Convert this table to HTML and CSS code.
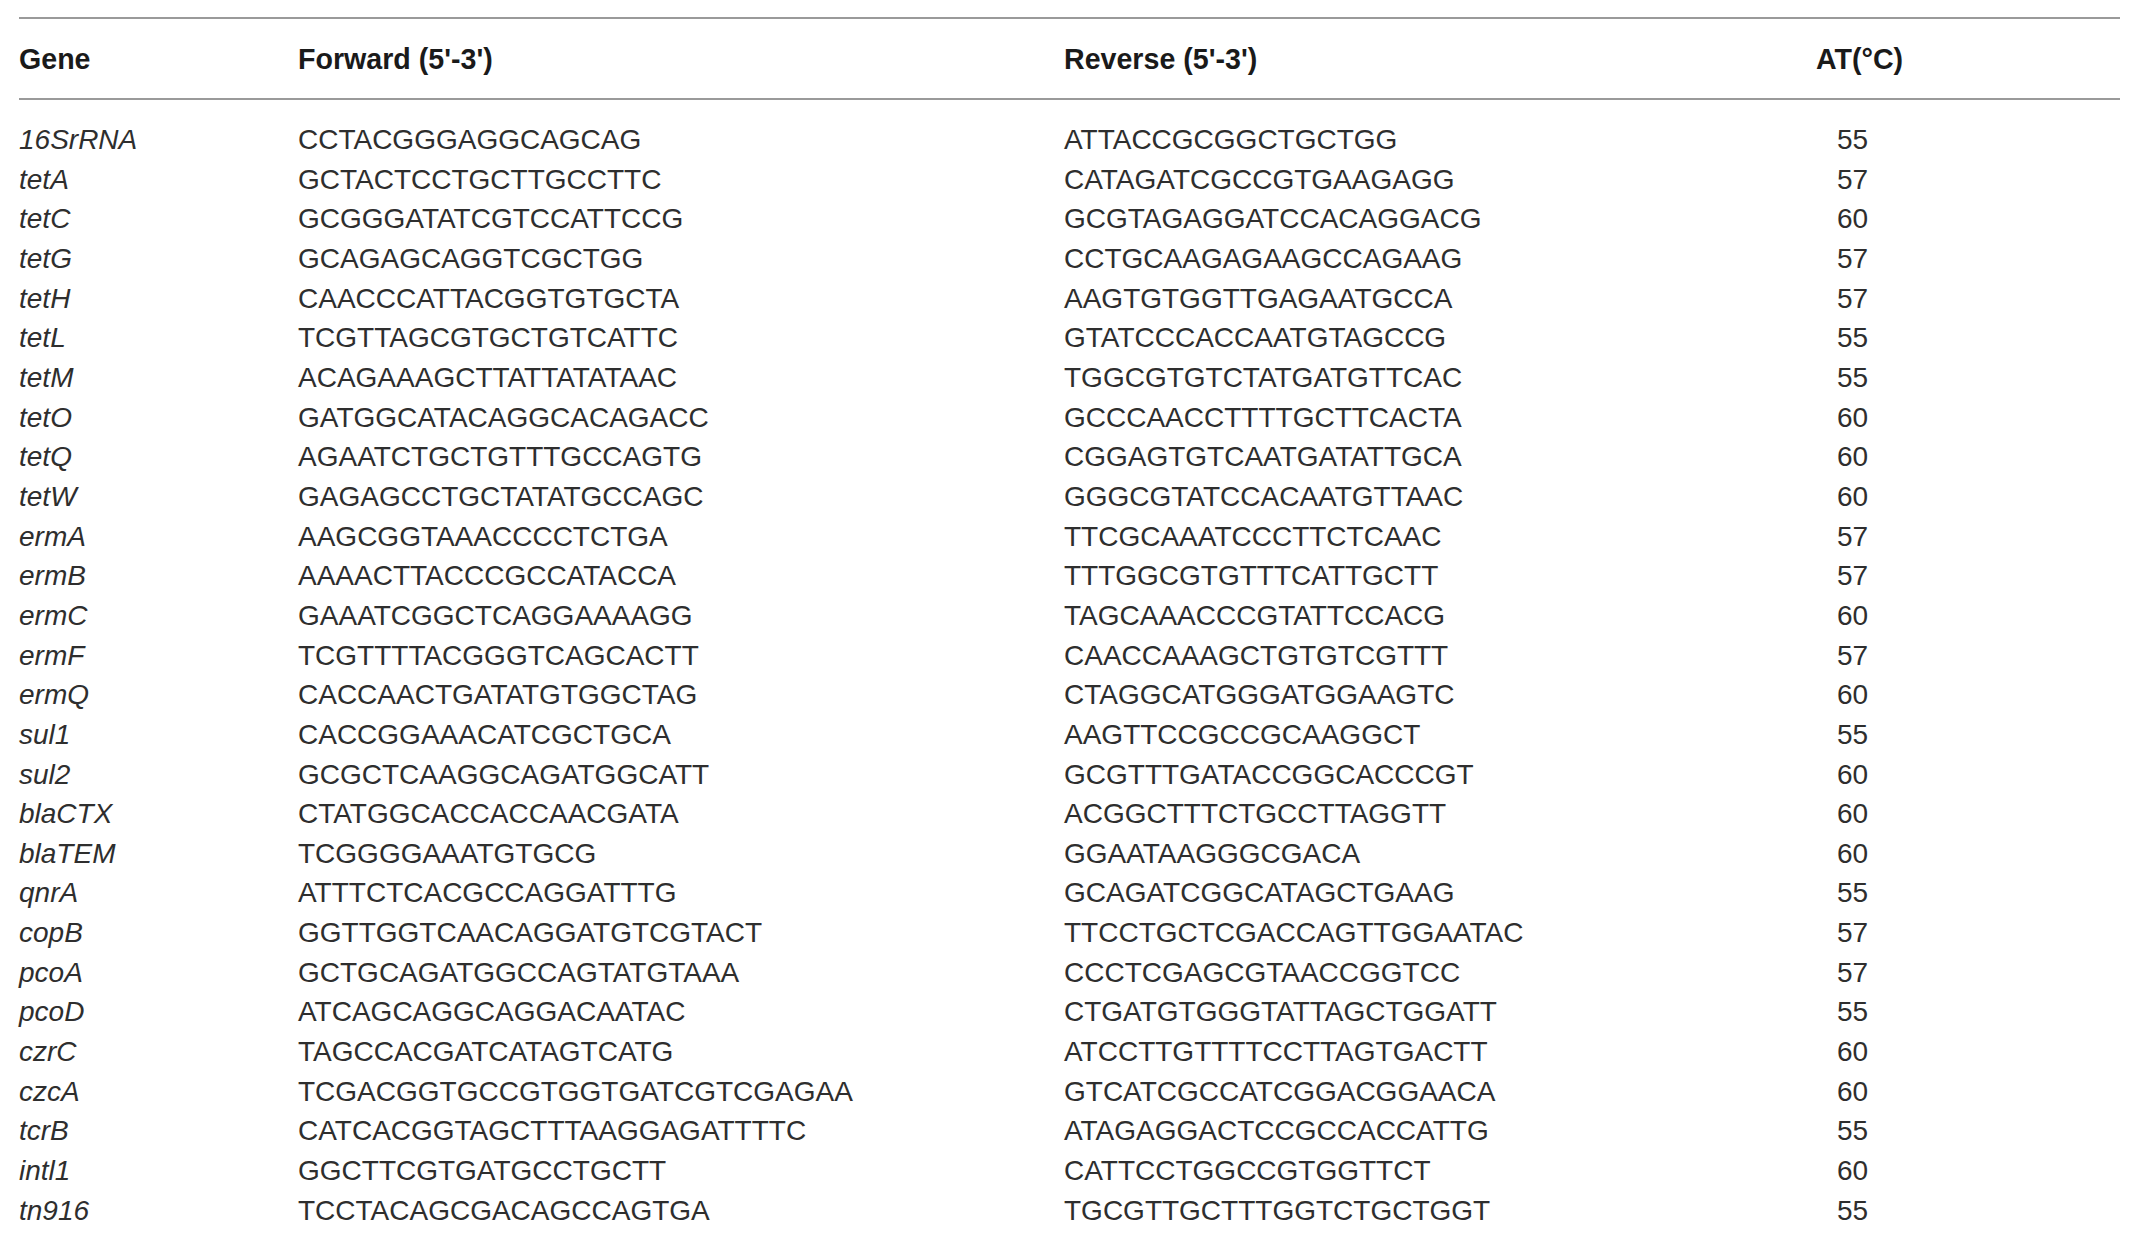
FILE: index.html
```html
<!DOCTYPE html>
<html lang="en">
<head>
  <meta charset="UTF-8" />
  <title>Primer sequences</title>
  <link rel="stylesheet" href="styles.css">
</head>
<body>

  <!-- primer table -->
  <table class="primers">
    <colgroup>
      <col class="col-gene">
      <col class="col-fwd">
      <col class="col-rev">
      <col class="col-at">
    </colgroup>
    <thead>
      <tr>
        <th>Gene</th>
        <th>Forward (5'-3')</th>
        <th>Reverse (5'-3')</th>
        <th>AT(°C)</th>
      </tr>
    </thead>
    <tbody>
      <tr><td class="gene">16SrRNA</td><td>CCTACGGGAGGCAGCAG</td><td>ATTACCGCGGCTGCTGG</td><td class="at">55</td></tr>
      <tr><td class="gene">tetA</td><td>GCTACTCCTGCTTGCCTTC</td><td>CATAGATCGCCGTGAAGAGG</td><td class="at">57</td></tr>
      <tr><td class="gene">tetC</td><td>GCGGGATATCGTCCATTCCG</td><td>GCGTAGAGGATCCACAGGACG</td><td class="at">60</td></tr>
      <tr><td class="gene">tetG</td><td>GCAGAGCAGGTCGCTGG</td><td>CCTGCAAGAGAAGCCAGAAG</td><td class="at">57</td></tr>
      <tr><td class="gene">tetH</td><td>CAACCCATTACGGTGTGCTA</td><td>AAGTGTGGTTGAGAATGCCA</td><td class="at">57</td></tr>
      <tr><td class="gene">tetL</td><td>TCGTTAGCGTGCTGTCATTC</td><td>GTATCCCACCAATGTAGCCG</td><td class="at">55</td></tr>
      <tr><td class="gene">tetM</td><td>ACAGAAAGCTTATTATATAAC</td><td>TGGCGTGTCTATGATGTTCAC</td><td class="at">55</td></tr>
      <tr><td class="gene">tetO</td><td>GATGGCATACAGGCACAGACC</td><td>GCCCAACCTTTTGCTTCACTA</td><td class="at">60</td></tr>
      <tr><td class="gene">tetQ</td><td>AGAATCTGCTGTTTGCCAGTG</td><td>CGGAGTGTCAATGATATTGCA</td><td class="at">60</td></tr>
      <tr><td class="gene">tetW</td><td>GAGAGCCTGCTATATGCCAGC</td><td>GGGCGTATCCACAATGTTAAC</td><td class="at">60</td></tr>
      <tr><td class="gene">ermA</td><td>AAGCGGTAAACCCCTCTGA</td><td>TTCGCAAATCCCTTCTCAAC</td><td class="at">57</td></tr>
      <tr><td class="gene">ermB</td><td>AAAACTTACCCGCCATACCA</td><td>TTTGGCGTGTTTCATTGCTT</td><td class="at">57</td></tr>
      <tr><td class="gene">ermC</td><td>GAAATCGGCTCAGGAAAAGG</td><td>TAGCAAACCCGTATTCCACG</td><td class="at">60</td></tr>
      <tr><td class="gene">ermF</td><td>TCGTTTTACGGGTCAGCACTT</td><td>CAACCAAAGCTGTGTCGTTT</td><td class="at">57</td></tr>
      <tr><td class="gene">ermQ</td><td>CACCAACTGATATGTGGCTAG</td><td>CTAGGCATGGGATGGAAGTC</td><td class="at">60</td></tr>
      <tr><td class="gene">sul1</td><td>CACCGGAAACATCGCTGCA</td><td>AAGTTCCGCCGCAAGGCT</td><td class="at">55</td></tr>
      <tr><td class="gene">sul2</td><td>GCGCTCAAGGCAGATGGCATT</td><td>GCGTTTGATACCGGCACCCGT</td><td class="at">60</td></tr>
      <tr><td class="gene">blaCTX</td><td>CTATGGCACCACCAACGATA</td><td>ACGGCTTTCTGCCTTAGGTT</td><td class="at">60</td></tr>
      <tr><td class="gene">blaTEM</td><td>TCGGGGAAATGTGCG</td><td>GGAATAAGGGCGACA</td><td class="at">60</td></tr>
      <tr><td class="gene">qnrA</td><td>ATTTCTCACGCCAGGATTTG</td><td>GCAGATCGGCATAGCTGAAG</td><td class="at">55</td></tr>
      <tr><td class="gene">copB</td><td>GGTTGGTCAACAGGATGTCGTACT</td><td>TTCCTGCTCGACCAGTTGGAATAC</td><td class="at">57</td></tr>
      <tr><td class="gene">pcoA</td><td>GCTGCAGATGGCCAGTATGTAAA</td><td>CCCTCGAGCGTAACCGGTCC</td><td class="at">57</td></tr>
      <tr><td class="gene">pcoD</td><td>ATCAGCAGGCAGGACAATAC</td><td>CTGATGTGGGTATTAGCTGGATT</td><td class="at">55</td></tr>
      <tr><td class="gene">czrC</td><td>TAGCCACGATCATAGTCATG</td><td>ATCCTTGTTTTCCTTAGTGACTT</td><td class="at">60</td></tr>
      <tr><td class="gene">czcA</td><td>TCGACGGTGCCGTGGTGATCGTCGAGAA</td><td>GTCATCGCCATCGGACGGAACA</td><td class="at">60</td></tr>
      <tr><td class="gene">tcrB</td><td>CATCACGGTAGCTTTAAGGAGATTTTC</td><td>ATAGAGGACTCCGCCACCATTG</td><td class="at">55</td></tr>
      <tr><td class="gene">intl1</td><td>GGCTTCGTGATGCCTGCTT</td><td>CATTCCTGGCCGTGGTTCT</td><td class="at">60</td></tr>
      <tr><td class="gene">tn916</td><td>TCCTACAGCGACAGCCAGTGA</td><td>TGCGTTGCTTTGGTCTGCTGGT</td><td class="at">55</td></tr>
    </tbody>
  </table>

</body>
</html>
```

FILE: styles.css
```css
body {
  margin: 0;
  padding: 0;
  background: #fff;
  font-family: "Liberation Sans", Arial, sans-serif;
  color: #1e1e1e;
}

.primers {
  margin: 17px 0 0 19px;
  width: 2101px;
  table-layout: fixed;
  border-collapse: separate;
  border-spacing: 0;
  font-size: 28px;
}

.col-gene { width: 279px; }
.col-fwd { width: 766px; }
.col-rev { width: 752px; }
.col-at { width: 304px; }

.primers th {
  text-align: left;
  font-size: 28.6px;
  font-weight: bold;
  line-height: 32px;
  padding: 24px 0 23px 0;
  border-top: 2px solid #9a9a9a;
  border-bottom: 2px solid #9a9a9a;
  color: #1a1a1a;
}

.primers td {
  padding: 0;
  line-height: 39.65px;
  height: 39.65px;
  white-space: nowrap;
  color: #2e2e2e;
}

.primers tbody tr:first-child td {
  padding-top: 20px;
}

.primers td.gene {
  font-style: italic;
}

.primers td.at {
  padding-left: 21px;
}
```
